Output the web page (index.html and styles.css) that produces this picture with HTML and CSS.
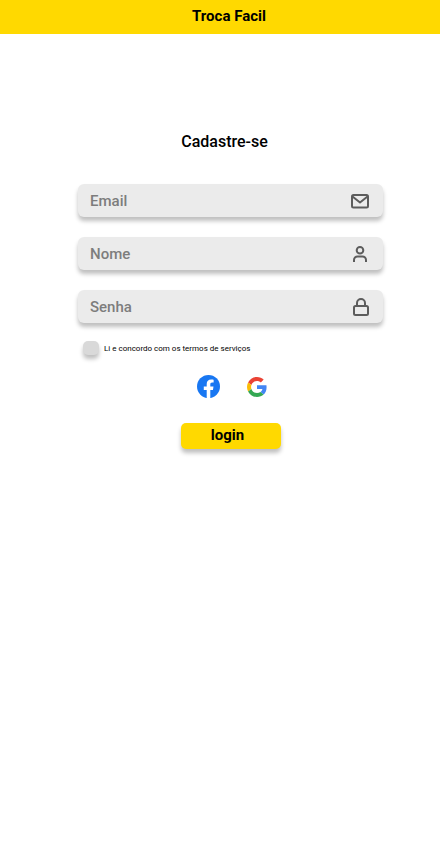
FILE: index.html
```html
<!DOCTYPE html>
<html lang="pt-BR">
<head>
<meta charset="utf-8">
<meta name="viewport" content="width=device-width, initial-scale=1">
<title>Troca Facil</title>
<link rel="stylesheet" href="styles.css">
</head>
<body>
<header class="topbar">Troca Facil</header>
<main class="signup">
  <h1 class="title">Cadastre-se</h1>
  <form class="form">
    <div class="field">
      <input class="input" type="email" placeholder="Email" aria-label="Email">
      <svg class="icon" viewBox="0 0 20 20" aria-hidden="true"><rect x="2" y="4" width="16" height="12.500" rx="1.500"/><path d="M2.500 5.500 10 11.500l7.500-6"/></svg>
    </div>
    <div class="field">
      <input class="input" type="text" placeholder="Nome" aria-label="Nome">
      <svg class="icon" viewBox="0 0 20 20" aria-hidden="true"><circle cx="10" cy="6.200" r="3.300"/><path d="M4 18v-2a3.500 3.500 0 0 1 3.500-3.500h5a3.500 3.500 0 0 1 3.500 3.500v2"/></svg>
    </div>
    <div class="field">
      <input class="input" type="password" placeholder="Senha" aria-label="Senha">
      <svg class="icon" viewBox="0 0 20 20" aria-hidden="true"><rect x="4" y="9" width="14" height="9" rx="1.500"/><path d="M7 9V6a4 4 0 0 1 8 0v3"/></svg>
    </div>
    <label class="terms"><input class="check" type="checkbox"><span>Li e concordo com os termos de serviços</span></label>
    <div class="social">
      <a class="social-link" href="#facebook" aria-label="Facebook">
        <svg class="facebook" viewBox="0 0 24 24"><circle cx="12" cy="12" r="12" fill="#1877f2"/><path fill="#fff" d="M10.130 24v-8.440H7.080v-3.490h3.050V9.410c0-3.020 1.790-4.690 4.530-4.690 1.310 0 2.690.24 2.690.24v2.970h-1.520c-1.490 0-1.950.93-1.950 1.890v2.250h3.320l-.53 3.490h-2.790V24a12 12 0 0 1-3.750 0z"/></svg>
      </a>
      <a class="social-link" href="#google" aria-label="Google">
        <svg class="google" viewBox="0 0 48 48"><path fill="#ea4335" d="M24 9.500c3.540 0 6.710 1.220 9.210 3.600l6.850-6.850C35.900 2.380 30.470 0 24 0 14.620 0 6.510 5.380 2.560 13.220l7.980 6.190C12.430 13.720 17.740 9.500 24 9.500z"/><path fill="#4285f4" d="M46.980 24.550c0-1.570-.15-3.090-.38-4.550H24v9.020h12.940c-.58 2.960-2.260 5.480-4.780 7.180l7.730 6c4.510-4.180 7.090-10.360 7.090-17.650z"/><path fill="#fbbc05" d="M10.530 28.590c-.48-1.450-.76-2.990-.76-4.590s.27-3.140.76-4.590l-7.980-6.190C.92 16.460 0 20.120 0 24s.92 7.540 2.560 10.780l7.970-6.190z"/><path fill="#34a853" d="M24 48c6.480 0 11.930-2.130 15.890-5.810l-7.730-6c-2.150 1.450-4.920 2.300-8.160 2.300-6.260 0-11.570-4.220-13.470-9.910l-7.980 6.190C6.510 42.620 14.620 48 24 48z"/></svg>
      </a>
    </div>
    <button class="submit" type="button">login</button>
  </form>
</main>
</body>
</html>
```
FILE: styles.css
```css
* {
  box-sizing: border-box;
}

body {
  margin: 0;
  background: #fff;
  color: #000;
  font-family: Roboto, "Liberation Sans", sans-serif;
}

.topbar {
  height: 34px;
  padding-left: 18px;
  background: #ffd900;
  font-size: 15px;
  font-weight: 700;
  line-height: 32px;
  text-align: center;
}

.signup {
  padding: 98px 57px 40px 78px;
}

.title {
  margin: 0 0 32px;
  padding-right: 12px;
  font-size: 16px;
  font-weight: 500;
  line-height: 20px;
  text-align: center;
}

.form {
  display: flex;
  flex-direction: column;
}

.field {
  display: flex;
  align-items: center;
  height: 33px;
  margin-bottom: 20px;
  padding: 0 13px 0 12px;
  border-radius: 6px;
  background: #ebebeb;
  box-shadow: 0 4px 4px rgba(0, 0, 0, 0.25);
}

.input {
  flex: 1;
  min-width: 0;
  height: 100%;
  padding: 0;
  border: 0;
  outline: 0;
  background: none;
  color: #333;
  font-family: inherit;
  font-size: 15px;
  font-weight: 500;
}

.input::placeholder {
  color: #7d7d7d;
  opacity: 1;
}

.icon {
  width: 20px;
  height: 20px;
  fill: none;
  stroke: #5c5c5c;
  stroke-width: 2;
  stroke-linejoin: round;
}

.terms {
  display: flex;
  align-items: center;
  gap: 5px;
  height: 14px;
  margin: -2px 0 20px 5px;
  font-size: 8px;
}

.check {
  appearance: none;
  width: 16px;
  height: 14px;
  margin: 0;
  border-radius: 5px;
  background: #d9d9d9;
  box-shadow: 0 4px 4px rgba(0, 0, 0, 0.25);
}

.check:checked {
  background: #ffd900;
}

.social {
  display: flex;
  align-items: center;
  justify-content: center;
  gap: 27px;
  height: 23px;
  margin-bottom: 25px;
  padding-left: 2px;
}

.social-link,
.social-link svg {
  display: block;
}

.facebook {
  width: 23px;
  height: 23px;
}

.google {
  width: 20px;
  height: 20px;
}

.submit {
  align-self: center;
  width: 100px;
  height: 26px;
  padding: 0 6px 2px 0;
  border: 0;
  border-radius: 5px;
  background: #ffd900;
  box-shadow: 0 4px 4px rgba(0, 0, 0, 0.25);
  color: #000;
  font-family: inherit;
  font-size: 15px;
  font-weight: 700;
}
```
